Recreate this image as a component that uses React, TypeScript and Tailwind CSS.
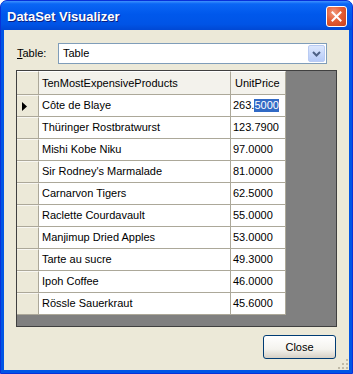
import React from "react";

const rows: [string, string][] = [
  ["Côte de Blaye", "263.5000"],
  ["Thüringer Rostbratwurst", "123.7900"],
  ["Mishi Kobe Niku", "97.0000"],
  ["Sir Rodney's Marmalade", "81.0000"],
  ["Carnarvon Tigers", "62.5000"],
  ["Raclette Courdavault", "55.0000"],
  ["Manjimup Dried Apples", "53.0000"],
  ["Tarte au sucre", "49.3000"],
  ["Ipoh Coffee", "46.0000"],
  ["Rössle Sauerkraut", "45.6000"],
];

export default function App() {
  return (
    <div className="w-[353px] h-[374px] bg-white">
      <div
        className="w-[353px] h-[374px] flex flex-col rounded-t-[7px] overflow-hidden bg-[#0055E5] border border-[#0831D9]"
        style={{ fontFamily: '"Liberation Sans", Arial, sans-serif' }}
      >
        {/* Title bar */}
        <div className="h-[29px] shrink-0 flex items-center justify-between pl-[6px] pr-[5px] bg-[linear-gradient(to_bottom,#3E92FF_0%,#0A66F5_10%,#0058EC_45%,#0054E6_80%,#0048D4_100%)]">
          <span className="text-white font-bold text-[13px] leading-none [text-shadow:1px_1px_0_#0A1E80] pt-[2px]">
            DataSet Visualizer
          </span>
          <div className="w-[21px] h-[21px] mt-[1px] rounded-[3px] border border-white bg-[radial-gradient(circle_at_35%_30%,#F29A7C_0%,#E35D35_45%,#C8401B_100%)] flex items-center justify-center">
            <svg width="11" height="11" viewBox="0 0 11 11">
              <path d="M1.5 1.5 L9.5 9.5 M9.5 1.5 L1.5 9.5" stroke="white" strokeWidth="2" strokeLinecap="square" />
            </svg>
          </div>
        </div>
        {/* Client area */}
        <div className="flex-1 mx-[3px] mb-[3px] bg-[#ECE9D8] flex flex-col relative">
          {/* Table row */}
          <div className="flex items-center mt-[13px] h-[21px]">
            <span className="ml-[13px] text-[11px] text-black w-[41px]">
              <span className="underline">T</span>able:
            </span>
            <div className="w-[269px] h-[21px] bg-white border border-[#7F9DB9] flex items-center justify-between">
              <span className="pl-[4px] text-[11px] text-black">Table</span>
              <div className="w-[17px] h-[17px] mr-[1px] rounded-[2px] border border-[#B9CBF3] bg-[linear-gradient(to_bottom,#DCE7FD,#B6CBF8)] flex items-center justify-center">
                <svg width="9" height="6" viewBox="0 0 9 6">
                  <path d="M1 1 L4.5 4.5 L8 1" fill="none" stroke="#4D6185" strokeWidth="2" />
                </svg>
              </div>
            </div>
          </div>
          {/* Grid */}
          <div className="ml-[12px] mt-[6px] w-[321px] h-[257px] border border-[#404040] bg-[#808080] flex flex-col">
            {/* header */}
            <div className="flex h-[24px]">
              <div className="w-[22px] h-[24px] bg-[#ECE9D8] border-r border-[#ACA899] border-b border-b-[#ACA899] border-t border-t-white" />
              <div className="w-[192px] h-[24px] bg-[#F3F2EC] border-r border-[#ACA899] border-b border-b-[#ACA899] border-t border-t-white flex items-center pl-[3px] text-[11px] text-black">
                TenMostExpensiveProducts
              </div>
              <div className="w-[55px] h-[24px] bg-[#F3F2EC] border-r border-[#ACA899] border-b border-b-[#ACA899] border-t border-t-white flex items-center pl-[4px] text-[11px] text-black">
                UnitPrice
              </div>
            </div>
            {rows.map(([name, price], i) => (
              <div key={name} className="flex h-[22px]">
                <div className="w-[22px] h-[22px] bg-[#ECE9D8] border-r border-[#ACA899] border-b border-b-[#ACA899] border-t border-t-[#F8F7F2] flex items-center pl-[5px]">
                  {i === 0 && (
                    <svg width="5" height="9" viewBox="0 0 5 9">
                      <path d="M0 0 L5 4.5 L0 9 Z" fill="black" />
                    </svg>
                  )}
                </div>
                <div className="w-[192px] h-[22px] bg-white border-r border-b border-[#ACA899] flex items-center pl-[3px] text-[11px] text-black">
                  {name}
                </div>
                <div className="w-[55px] h-[22px] bg-white border-r border-b border-[#ACA899] flex items-center pl-[2px] text-[11px] text-black">
                  {i === 0 ? (
                    <span className="flex items-center h-[12px]">
                      263.
                      <span className="bg-[#316AC5] text-white h-[13px] flex items-center">5000</span>
                    </span>
                  ) : (
                    price
                  )}
                </div>
              </div>
            ))}
          </div>
          {/* Button */}
          <div className="flex justify-end mr-[13px] mt-[8px]">
            <button className="w-[73px] h-[24px] rounded-[3px] border border-[#003C74] bg-[linear-gradient(to_bottom,#FFFFFF_0%,#F4F3EE_60%,#D6D0C5_100%)] text-[11px] text-black flex items-center justify-center">
              Close
            </button>
          </div>
          {/* resize grip */}
          <div className="absolute right-[1px] bottom-[1px] w-[11px] h-[11px] grid grid-cols-3 gap-[1px] place-items-center">
            <span />
            <span />
            <span className="w-[2px] h-[2px] bg-[#C0BBA8]" />
            <span />
            <span className="w-[2px] h-[2px] bg-[#C0BBA8]" />
            <span className="w-[2px] h-[2px] bg-[#C0BBA8]" />
            <span className="w-[2px] h-[2px] bg-[#C0BBA8]" />
            <span className="w-[2px] h-[2px] bg-[#C0BBA8]" />
            <span className="w-[2px] h-[2px] bg-[#C0BBA8]" />
          </div>
        </div>
      </div>
    </div>
  );
}
